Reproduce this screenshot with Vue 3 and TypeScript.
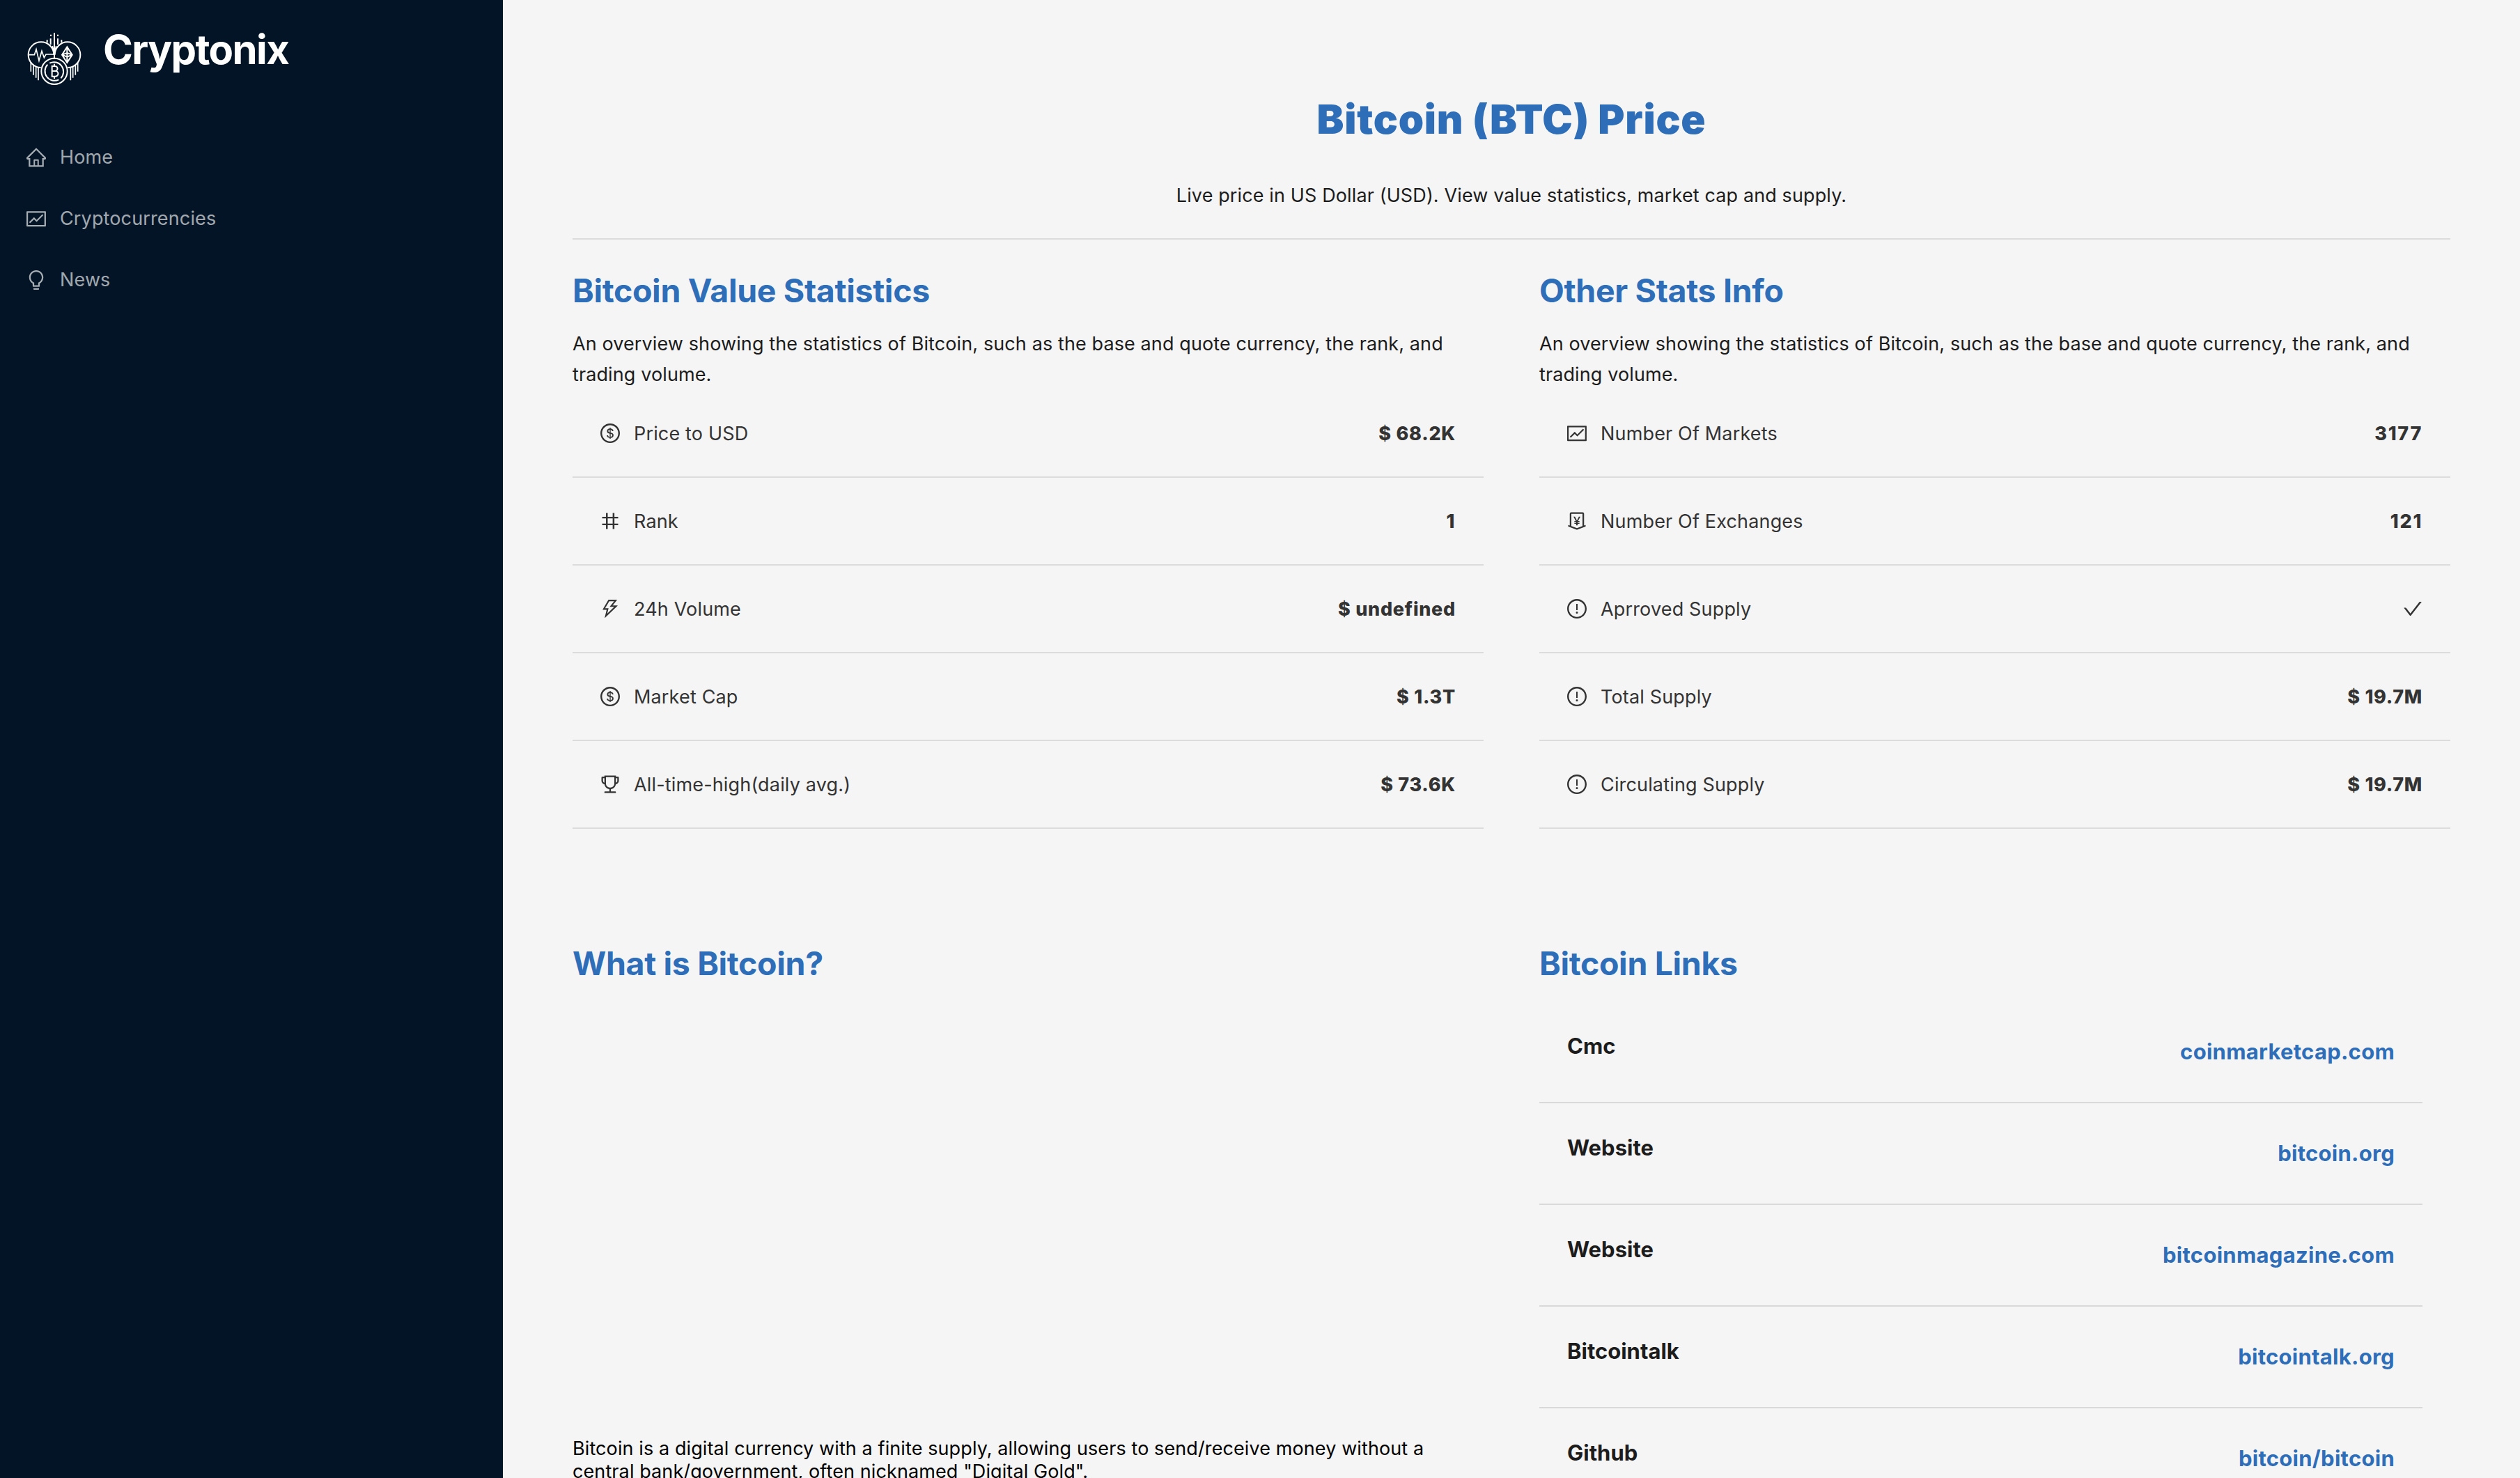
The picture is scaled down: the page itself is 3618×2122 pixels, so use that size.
<script setup lang="ts">
interface Stat {
  icon: string
  label: string
  value?: string
}

interface CoinLink {
  type: string
  name: string
}

const icons: Record<string, string[]> = {
  home: ['M946.5 505L560.1 118.8l-25.9-25.9a31.5 31.5 0 00-44.4 0L77.5 505a63.9 63.9 0 00-18.8 46c.4 35.2 29.7 63.3 64.9 63.3h42.5V940h691.8V614.3h43.4c17.1 0 33.2-6.7 45.3-18.8a63.6 63.6 0 0018.7-45.3c0-17-6.7-33.1-18.8-45.2zM568 868H456V664h112v204zm217.9-325.7V868H632V640c0-22.1-17.9-40-40-40H432c-22.1 0-40 17.9-40 40v228H238.1V542.3h-96l370-369.7 23.1 23.1L882 542.3h-96.1z'],
  fund: ['M926 164H94c-17.7 0-32 14.3-32 32v640c0 17.7 14.3 32 32 32h832c17.7 0 32-14.3 32-32V196c0-17.7-14.3-32-32-32zm-40 632H134V236h752v560zm-658.9-82.3c3.1 3.1 8.2 3.1 11.3 0l172.5-172.5 114.4 114.5c3.1 3.1 8.2 3.1 11.3 0l297-297.2c3.1-3.1 3.1-8.2 0-11.3l-36.8-36.8a8.03 8.03 0 00-11.3 0L531 565 416.6 450.5a8.03 8.03 0 00-11.3 0l-214.9 215a8.03 8.03 0 000 11.3l36.7 36.9z'],
  bulb: ['M632 888H392c-4.4 0-8 3.6-8 8v32c0 17.7 14.3 32 32 32h192c17.7 0 32-14.3 32-32v-32c0-4.4-3.6-8-8-8zM512 64c-181.1 0-328 146.9-328 328 0 121.4 66 227.4 164 284.1V792c0 17.7 14.3 32 32 32h264c17.7 0 32-14.3 32-32V676.1c98-56.7 164-162.7 164-284.1 0-181.1-146.9-328-328-328zm127.9 549.8L604 634.6V752H420V634.6l-35.9-20.8C305.4 568.3 256 484.5 256 392c0-141.4 114.6-256 256-256s256 114.6 256 256c0 92.5-49.4 176.3-128.1 221.8z'],
  dollar: ['M512 64C264.6 64 64 264.6 64 512s200.6 448 448 448 448-200.6 448-448S759.4 64 512 64zm0 820c-205.4 0-372-166.6-372-372s166.6-372 372-372 372 166.6 372 372-166.6 372-372 372zm47.7-395.2l-25.4-5.9V348.6c38 5.2 61.5 29 65.5 58.2.5 4 3.9 6.9 7.9 6.9h44.9c4.7 0 8.4-4.1 8-8.8-6.1-62.3-57.4-102.3-125.9-109.2V263c0-4.4-3.6-8-8-8h-28.1c-4.4 0-8 3.6-8 8v33c-70.8 6.9-126.2 46-126.2 119 0 67.6 49.8 100.2 102.1 112.7l24.7 6.3v142.7c-44.2-5.9-69-29.5-74.1-61.3-.6-3.8-4-6.6-7.9-6.6H363c-4.7 0-8.4 4-8 8.7 4.5 55 46.2 105.6 135.2 112.1V761c0 4.4 3.6 8 8 8h28.4c4.4 0 8-3.6 8-8.1l-.2-31.7c78.3-6.9 134.3-48.8 134.3-124-.1-69.4-44.2-100.4-109-116.4zm-68.6-16.2c-5.6-1.6-10.3-3.1-15-5-33.8-12.2-49.5-31.9-49.5-57.3 0-36.3 27.5-57 64.5-61.7v124zM534.3 677V543.3c3.1.9 5.9 1.6 8.8 2.2 47.3 14.4 63.2 34.4 63.2 65.1 0 39.1-29.4 62.6-72 66.4z'],
  number: ['M872 394c4.4 0 8-3.6 8-8v-60c0-4.4-3.6-8-8-8H708V152c0-4.4-3.6-8-8-8h-64c-4.4 0-8 3.6-8 8v166H400V152c0-4.4-3.6-8-8-8h-64c-4.4 0-8 3.6-8 8v166H152c-4.4 0-8 3.6-8 8v60c0 4.4 3.6 8 8 8h168v236H152c-4.4 0-8 3.6-8 8v60c0 4.4 3.6 8 8 8h168v166c0 4.4 3.6 8 8 8h64c4.4 0 8-3.6 8-8V706h228v166c0 4.4 3.6 8 8 8h64c4.4 0 8-3.6 8-8V706h164c4.4 0 8-3.6 8-8v-60c0-4.4-3.6-8-8-8H708V394h164zM628 630H400V394h228v236z'],
  thunderbolt: ['M848 359.3H627.7L825.8 109c4.1-5.3.4-13-6.3-13H436c-2.8 0-5.5 1.5-6.9 4L170 547.5c-3.1 5.3.7 12 6.9 12h174.4l-89.4 357.6c-1.9 7.8 7.5 13.3 13.3 7.7L853.5 373c5.2-4.9 1.7-13.7-5.5-13.7zM378.2 732.5l60.3-241H281.1l189.6-327.4h224.6L487 427.4h211L378.2 732.5z'],
  trophy: ['M868 160h-92v-40c0-4.4-3.6-8-8-8H256c-4.4 0-8 3.6-8 8v40h-92a44 44 0 00-44 44v148c0 81.7 60 149.6 138.2 162C265.7 630.2 359 721.7 476 734.5v105.2H280c-17.7 0-32 14.3-32 32V904c0 4.4 3.6 8 8 8h512c4.4 0 8-3.6 8-8v-32.3c0-17.7-14.3-32-32-32H548V734.5C665 721.7 758.3 630.2 773.8 514 852 501.6 912 433.7 912 352V204a44 44 0 00-44-44zM184 352V232h64v207.6a91.99 91.99 0 01-64-87.6zm520 128c0 49.1-19.1 95.4-53.9 130.1-34.8 34.8-81 53.9-130.1 53.9h-16c-49.1 0-95.4-19.1-130.1-53.9-34.8-34.8-53.9-81-53.9-130.1V184h384v296zm136-128c0 41-26.9 75.8-64 87.6V232h64v120z'],
  money: ['M911.5 700.7a8 8 0 00-10.3-4.8L840 718.2V180c0-37.6-30.4-68-68-68H252c-37.6 0-68 30.4-68 68v538.2l-61.3-22.3c-.9-.3-1.8-.5-2.7-.5-4.4 0-8 3.6-8 8V763c0 3.3 2.1 6.3 5.3 7.5L501 910.1c7.1 2.6 14.8 2.6 21.9 0l383.8-139.5c3.2-1.2 5.3-4.2 5.3-7.5v-59.6c0-1-.2-1.9-.5-2.8zM512 837.5l-256-93.1V184h512v560.4l-256 93.1zM660.6 312h-54.5c-3 0-5.8 1.7-7.1 4.4l-84.7 168.8H511l-84.7-168.8a8 8 0 00-7.1-4.4h-55.7c-1.3 0-2.6.3-3.8 1-3.9 2.1-5.3 7-3.2 10.8l103.9 191.6h-57c-4.4 0-8 3.6-8 8v27.1c0 4.4 3.6 8 8 8h76v39h-76c-4.4 0-8 3.6-8 8v27.1c0 4.4 3.6 8 8 8h76V704c0 4.4 3.6 8 8 8h49.9c4.4 0 8-3.6 8-8v-63.5h76.3c4.4 0 8-3.6 8-8v-27.1c0-4.4-3.6-8-8-8h-76.3v-39h76.3c4.4 0 8-3.6 8-8v-27.1c0-4.4-3.6-8-8-8H564l103.7-191.6c.6-1.2 1-2.5 1-3.8-.1-4.3-3.7-7.9-8.1-7.9z'],
  exclamation: [
    'M512 64C264.6 64 64 264.6 64 512s200.6 448 448 448 448-200.6 448-448S759.4 64 512 64zm0 820c-205.4 0-372-166.6-372-372s166.6-372 372-372 372 166.6 372 372-166.6 372-372 372z',
    'M464 688a48 48 0 1096 0 48 48 0 10-96 0zm24-112h48c4.4 0 8-3.6 8-8V296c0-4.4-3.6-8-8-8h-48c-4.4 0-8 3.6-8 8v272c0 4.4 3.6 8 8 8z',
  ],
  check: ['M912 190h-69.9c-9.8 0-19.1 4.5-25.1 12.2L404.7 724.5 207 474a32 32 0 00-25.1-12.2H112c-6.7 0-10.4 7.7-6.3 12.9l273.9 347c12.8 16.2 37.4 16.2 50.3 0l488.4-618.9c4.1-5.1.4-12.8-6.3-12.8z'],
}

const menu = [
  { icon: 'home', label: 'Home' },
  { icon: 'fund', label: 'Cryptocurrencies' },
  { icon: 'bulb', label: 'News' },
]

const overview =
  'An overview showing the statistics of Bitcoin, such as the base and quote currency, the rank, and trading volume.'

const sections: { title: string; stats: Stat[] }[] = [
  {
    title: 'Bitcoin Value Statistics',
    stats: [
      { icon: 'dollar', label: 'Price to USD', value: '$ 68.2K' },
      { icon: 'number', label: 'Rank', value: '1' },
      { icon: 'thunderbolt', label: '24h Volume', value: '$ undefined' },
      { icon: 'dollar', label: 'Market Cap', value: '$ 1.3T' },
      { icon: 'trophy', label: 'All-time-high(daily avg.)', value: '$ 73.6K' },
    ],
  },
  {
    title: 'Other Stats Info',
    stats: [
      { icon: 'fund', label: 'Number Of Markets', value: '3177' },
      { icon: 'money', label: 'Number Of Exchanges', value: '121' },
      { icon: 'exclamation', label: 'Aprroved Supply' },
      { icon: 'exclamation', label: 'Total Supply', value: '$ 19.7M' },
      { icon: 'exclamation', label: 'Circulating Supply', value: '$ 19.7M' },
    ],
  },
]

const links: CoinLink[] = [
  { type: 'Cmc', name: 'coinmarketcap.com' },
  { type: 'Website', name: 'bitcoin.org' },
  { type: 'Website', name: 'bitcoinmagazine.com' },
  { type: 'Bitcointalk', name: 'bitcointalk.org' },
  { type: 'Github', name: 'bitcoin/bitcoin' },
]

const isPlainNumber = (value: string): boolean => /^\d+$/.test(value)
</script>

<template>
  <div class="app">
    <aside class="sidebar">
      <div class="brand">
        <svg class="logo" viewBox="54 45 240 240" fill="none" stroke="#fff" stroke-width="6">
          <path d="M174 52v112" />
          <path d="M166 108l8 34 8-34" stroke-width="5" />
          <path d="M158 76v26M189 76v26M143 82v12M205 82v12" />
          <path d="M159 59v7M189 59v7" />
          <path d="M116 201A55 55 0 1 1 172 146M232 201A55 55 0 1 0 176 146" />
          <path d="M65 146h23l8-24 12 50 12-42 10 28 8-14h34" stroke-width="5" />
          <path d="M229 112l22 34-22 34-22-34zM229 112v68M207 146l22 9 22-9M207 146l22-8 22 8" stroke-width="6" />
          <path d="M73 178v40M84 188v45M95 194v51M105 198v58M275 178v40M265 188v45M254 194v51M244 198v58" stroke-width="5" />
          <circle cx="174" cy="217" r="56" />
          <path d="M145 188a41 41 0 0 0 48 65M202 247a41 41 0 0 0-48-65" stroke-width="6" />
          <path d="M164 195h13a10.500 10.500 0 0 1 0 21h-13zM164 216h15a11 11 0 0 1 0 23h-15zM174 185v10M174 239v10" stroke-width="6" />
        </svg>
        <h1 class="brand-name">Cryptonix</h1>
      </div>
      <nav class="menu">
        <a v-for="item in menu" :key="item.label" class="menu-item">
          <svg class="icon" viewBox="64 64 896 896" fill="currentColor">
            <path v-for="d in icons[item.icon]" :key="d" :d="d" />
          </svg>
          <span>{{ item.label }}</span>
        </a>
      </nav>
    </aside>

    <main class="content">
      <header class="coin-header">
        <h1 class="coin-name">Bitcoin (BTC) Price</h1>
        <p class="coin-lead">Live price in US Dollar (USD). View value statistics, market cap and supply.</p>
      </header>

      <div class="columns">
        <section v-for="section in sections" :key="section.title" class="column">
          <h2 class="heading">{{ section.title }}</h2>
          <p class="overview">{{ overview }}</p>
          <div v-for="stat in section.stats" :key="stat.label" class="stat">
            <svg class="icon" viewBox="64 64 896 896" fill="currentColor">
              <path v-for="d in icons[stat.icon]" :key="d" :d="d" />
            </svg>
            <span class="stat-label">{{ stat.label }}</span>
            <span v-if="stat.value" class="stat-value" :class="{ plain: isPlainNumber(stat.value) }">{{ stat.value }}</span>
            <svg v-else class="icon" viewBox="64 64 896 896" fill="currentColor">
              <path v-for="d in icons.check" :key="d" :d="d" />
            </svg>
          </div>
        </section>
      </div>

      <div class="columns lower">
        <section class="column about">
          <h2 class="heading">What is Bitcoin?</h2>
          <p class="description">
            Bitcoin is a digital currency with a finite supply, allowing users to send/receive money without a central
            bank/government, often nicknamed "Digital Gold".
          </p>
        </section>
        <section class="column links">
          <h2 class="heading">Bitcoin Links</h2>
          <div v-for="link in links" :key="link.name" class="link-row">
            <h5 class="link-type">{{ link.type }}</h5>
            <a class="link-name">{{ link.name }}</a>
          </div>
        </section>
      </div>
    </main>
  </div>
</template>

<style>
body {
  background: #f5f5f5;
}
</style>

<style scoped>
.app {
  display: flex;
  height: 2122px;
  overflow: hidden;
  background: #f5f5f5;
  color: #1c1c1c;
  font-family: Inter, "Liberation Sans", sans-serif;
  font-size: 27px;
}

h1,
h2,
h5,
p {
  margin: 0;
}

.icon {
  flex: none;
  width: 28px;
  height: 28px;
}

.sidebar {
  flex: none;
  box-sizing: border-box;
  width: 722px;
  padding: 31px 38px;
  background: #021426;
}

.brand {
  display: flex;
  height: 151px;
}

.logo {
  flex: none;
  width: 80px;
  height: 80px;
  margin-top: 14px;
}

.brand-name {
  margin-left: 30px;
  color: #fff;
  font-size: 58px;
  font-weight: 700;
  line-height: 80px;
  letter-spacing: -1.6px;
}

.menu {
  display: flex;
  flex-direction: column;
}

.menu-item {
  display: flex;
  align-items: center;
  gap: 20px;
  height: 88px;
  color: rgba(255, 255, 255, 0.65);
  line-height: 88px;
  letter-spacing: 0.14px;
}

.content {
  flex: 1;
  padding: 0 100px;
}

.coin-header {
  box-sizing: border-box;
  height: 344px;
  padding-top: 131px;
  border-bottom: 2px solid #dcdcdc;
  text-align: center;
}

.coin-name {
  color: #2e6eb9;
  font-size: 58.3px;
  font-weight: 900;
  line-height: 80px;
  letter-spacing: 0.75px;
}

.coin-lead {
  margin-top: 48px;
  line-height: 44px;
  letter-spacing: 0.12px;
}

.columns {
  display: flex;
  justify-content: space-between;
  margin-top: 41px;
}

.column {
  width: 1308px;
}

.heading {
  color: #2e6eb9;
  font-size: 46.5px;
  font-weight: 700;
  line-height: 64px;
  letter-spacing: -0.34px;
}

.overview {
  margin-top: 23px;
  line-height: 44px;
  letter-spacing: 0.106px;
}

.stat {
  display: flex;
  align-items: center;
  box-sizing: border-box;
  height: 126px;
  padding: 0 40px;
  border-bottom: 2px solid #dcdcdc;
  color: #333;
}

.stat-label {
  flex: 1;
  margin-left: 20px;
  letter-spacing: 0.16px;
}

.stat-value {
  font-weight: 800;
  letter-spacing: 0.72px;
}

.stat-value.plain {
  letter-spacing: 1.7px;
}

.lower {
  margin-top: 161px;
}

.about .description {
  width: 1268px;
  margin-top: 648px;
  color: #000;
  line-height: 33px;
  letter-spacing: 0.1px;
}

.links .link-row {
  display: flex;
  justify-content: space-between;
  box-sizing: border-box;
  width: 1268px;
  height: 146px;
  padding: 40px;
  border-bottom: 2px solid #d9d9d9;
  font-size: 31px;
  line-height: 48px;
}

.links .heading {
  margin-bottom: 23px;
}

.link-type {
  font-size: 31px;
  font-weight: 700;
  letter-spacing: 0;
}

.link-name {
  margin-top: 8px;
  color: #2e6eb9;
  font-weight: 700;
  letter-spacing: 0.28px;
}
</style>
